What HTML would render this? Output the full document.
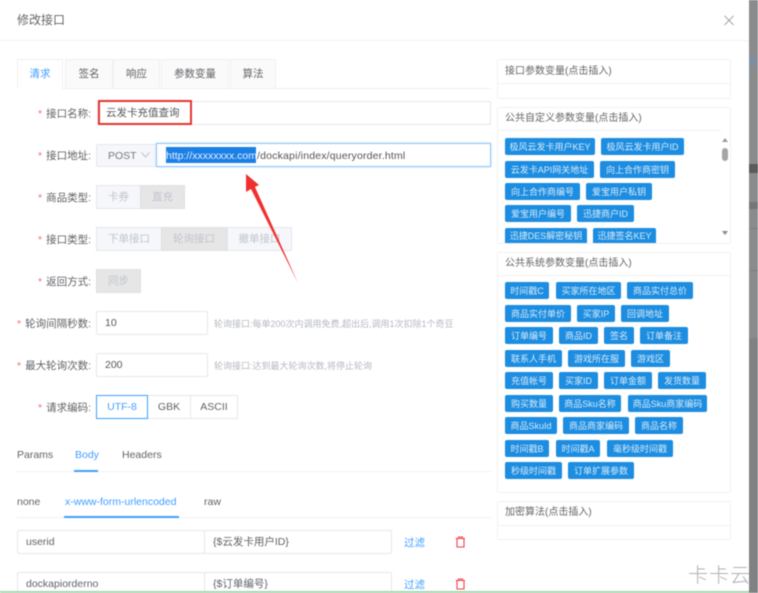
<!DOCTYPE html>
<html lang="zh"><head><meta charset="utf-8"><style>
html,body{margin:0;padding:0;width:758px;height:593px;overflow:hidden;background:#fff}
#r{position:relative;width:758px;height:593px;overflow:hidden;filter:blur(.45px);font:10.5px/1 "Liberation Sans","Noto Sans CJK SC",sans-serif;color:#606266}
#r div,#r span.a{position:absolute;box-sizing:border-box;white-space:nowrap}
.b{border:1px solid #e4e7ed;border-radius:2px;background:#fff}
.c{display:flex;align-items:center;justify-content:center;padding-top:1px}
.l{display:flex;align-items:center;justify-content:flex-end;right:667px;height:26px;color:#606266;font-size:10.5px}
.l i{color:#f56c6c;font-style:normal;margin-right:4px}
.d{background:#f5f7fa;color:#c0c4cc;border:1px solid #e4e7ed}
.e{background:#e6e6e6;color:#c0c4cc;border:1px solid #e0e0e0}
.t{background:#1c8de0;color:#d8ebfa;height:17px;border-radius:2px;display:flex;align-items:center;justify-content:center;font-size:9px;padding-top:1px}
.tab{top:59px;height:30px;background:#fafafa;border:1px solid #eff0f3;display:flex;align-items:center;justify-content:center;color:#606266;padding-top:1px}
.v{display:flex;align-items:center;padding-left:8px;padding-top:1px}
.h{color:#b4b8c0;font-size:9px}
.p{font-size:10px;color:#666}
</style></head><body><div id="r">
<div style="left:749px;top:0;width:9px;height:593px;background:#808182"></div>
<div style="left:749px;top:0;width:9px;height:338px;background:#8a8b8c"></div>
<div style="left:749px;top:58px;width:7px;height:8px;background:#7a8ea6"></div>
<div style="left:749px;top:164px;width:9px;height:9px;background:#5a5a5a"></div>
<div style="left:749px;top:202px;width:9px;height:7px;background:#767676"></div>
<div style="left:749px;top:228px;width:9px;height:1px;background:#7c7c7c"></div>
<div style="left:749px;top:270px;width:9px;height:1px;background:#7c7c7c"></div>

<div style="left:17px;top:14px;font-size:12px;line-height:13px;color:#666">修改接口</div>
<div style="left:0;top:40px;width:749px;height:1px;background:#f1f1f1"></div>
<svg style="position:absolute;left:724px;top:15px" width="10" height="11" viewBox="0 0 10 11"><path d="M.5 .8 9.5 10M9.5 .8 .5 10" stroke="#a0a3a8" stroke-width="1" fill="none"/></svg>

<div style="left:17px;top:88px;width:474px;height:1px;background:#eff0f3"></div>
<div class="tab" style="left:17px;width:46px;background:#fff;border-bottom-color:#fff;color:#409eff">清求</div>
<div class="tab" style="left:65px;width:48px">签名</div>
<div class="tab" style="left:113px;width:47px">响应</div>
<div class="tab" style="left:161px;width:68px">参数变量</div>
<div class="tab" style="left:230px;width:46px">算法</div>

<div class="l" style="top:101px"><i>*</i>接口名称:</div>
<div class="b v" style="left:97px;top:101px;width:394px;height:24px;color:#555">云发卡充值查询</div>
<div style="left:98px;top:100px;width:94px;height:25px;border:2px solid #e5352f"></div>

<div class="l" style="top:143px"><i>*</i>接口地址:</div>
<div class="b c" style="left:96px;top:144px;width:61px;height:23px;background:#f5f7fa;justify-content:flex-start;padding-left:11px;color:#777">POST</div>
<svg style="position:absolute;left:141px;top:152px" width="9" height="6" viewBox="0 0 9 6"><path d="M.5 .5 4.5 5 8.5 .5" stroke="#c0c4cc" fill="none"/></svg>
<div style="left:156px;top:143px;width:335px;height:24px;border:1px solid #8cc5ff;box-shadow:0 0 2px #b5d9fb;background:#fff"></div>
<div style="left:166px;top:147px;width:90px;height:16px;background:#1a7fe6"></div>
<div style="left:166px;top:148px;height:16px;line-height:16px;color:#555"><span style="color:#e8f2fc">http://xxxxxxxx.com</span><span style="letter-spacing:.18px">/dockapi/index/queryorder.html</span></div>

<div class="l" style="top:185px"><i>*</i>商品类型:</div>
<div class="d c" style="left:96px;top:185px;width:45px;height:24px">卡券</div>
<div class="e c" style="left:140px;top:185px;width:45px;height:24px">直充</div>

<div class="l" style="top:227px"><i>*</i>接口类型:</div>
<div class="d c" style="left:96px;top:227px;width:66px;height:24px">下单接口</div>
<div class="e c" style="left:161px;top:227px;width:66px;height:24px">轮询接口</div>
<div class="d c" style="left:227px;top:227px;width:65px;height:24px">撤单接口</div>

<div class="l" style="top:269px"><i>*</i>返回方式:</div>
<div class="e c" style="left:96px;top:269px;width:45px;height:24px">同步</div>

<div class="l" style="top:311px"><i>*</i>轮询间隔秒数:</div>
<div class="b v" style="left:96px;top:311px;width:112px;height:24px;color:#555">10</div>
<div class="h" style="left:214px;top:320px">轮询接口:每单200次内调用免费,超出后,调用1次扣除1个奇豆</div>

<div class="l" style="top:353px"><i>*</i>最大轮询次数:</div>
<div class="b v" style="left:96px;top:353px;width:112px;height:24px;color:#555">200</div>
<div class="h" style="left:214px;top:362px">轮询接口:达到最大轮询次数,将停止轮询</div>

<div class="l" style="top:395px"><i>*</i>请求编码:</div>
<div class="b c" style="left:147px;top:395px;width:44px;height:24px;border-radius:0">GBK</div>
<div class="b c" style="left:190px;top:395px;width:48px;height:24px;border-radius:0">ASCII</div>
<div class="c" style="left:96px;top:395px;width:52px;height:24px;border:1px solid #409eff;color:#409eff;background:#fff">UTF-8</div>

<svg style="position:absolute;left:0;top:0" width="758" height="593"><polygon points="246,174 259,185 255,187 298,283 251,189 246,192" fill="#f0302e"/></svg>

<div style="left:17px;top:450px">Params</div>
<div style="left:75px;top:450px;color:#409eff">Body</div>
<div style="left:122px;top:450px">Headers</div>
<div style="left:17px;top:471px;width:474px;height:1px;background:#f0f1f3"></div>
<div style="left:74px;top:470px;width:24px;height:2px;background:#409eff"></div>

<div style="left:17px;top:497px">none</div>
<div style="left:65px;top:497px;color:#409eff">x-www-form-urlencoded</div>
<div style="left:204px;top:497px">raw</div>
<div style="left:17px;top:517px;width:474px;height:1px;background:#f0f1f3"></div>
<div style="left:64px;top:516px;width:115px;height:2px;background:#409eff"></div>

<div class="b v" style="left:17px;top:530px;width:188px;height:24px">userid</div>
<div class="b v" style="left:204px;top:530px;width:188px;height:24px">{$云发卡用户ID}</div>
<div style="left:404px;top:538px;color:#409eff">过滤</div>
<svg style="position:absolute;left:455px;top:536px" width="11" height="12" viewBox="0 0 11 12"><path d="M.8 2.5H10M3.5 2.5V1H7.5V2.5M2 2.5V11H9V2.5" fill="none" stroke="#f0424a" stroke-width="1.1"/></svg>

<div class="b v" style="left:17px;top:572px;width:188px;height:24px">dockapiorderno</div>
<div class="b v" style="left:204px;top:572px;width:188px;height:24px">{$订单编号}</div>
<div style="left:404px;top:580px;color:#409eff">过滤</div>
<svg style="position:absolute;left:455px;top:578px" width="11" height="12" viewBox="0 0 11 12"><path d="M.8 2.5H10M3.5 2.5V1H7.5V2.5M2 2.5V11H9V2.5" fill="none" stroke="#f0424a" stroke-width="1.1"/></svg>

<!-- panel 1 -->
<div class="b" style="left:497px;top:59px;width:234px;height:40px;border-color:#f0f1f3"></div>
<div style="left:497px;top:83px;width:234px;height:1px;background:#f0f1f3"></div>
<div class="p" style="left:505px;top:67px">接口参数变量(点击插入)</div>

<!-- panel 2 -->
<div class="b" style="left:497px;top:107px;width:234px;height:137px;border-color:#f0f1f3"></div>
<div style="left:497px;top:130px;width:224px;height:1px;background:#f0f1f3"></div>
<div class="p" style="left:505px;top:114px">公共自定义参数变量(点击插入)</div>
<div class="t" style="left:505px;top:138px;width:90px">极风云发卡用户KEY</div>
<div class="t" style="left:601px;top:138px;width:83px">极风云发卡用户ID</div>
<div class="t" style="left:505px;top:161px;width:89px">云发卡API网关地址</div>
<div class="t" style="left:600px;top:161px;width:75px">向上合作商密钥</div>
<div class="t" style="left:505px;top:183px;width:75px">向上合作商编号</div>
<div class="t" style="left:586px;top:183px;width:66px">爱宝用户私钥</div>
<div class="t" style="left:505px;top:205px;width:66px">爱宝用户编号</div>
<div class="t" style="left:577px;top:205px;width:57px">迅捷商户ID</div>
<div class="t" style="left:505px;top:228px;width:82px;height:15px;border-radius:2px 2px 0 0">迅捷DES解密秘钥</div>
<div class="t" style="left:593px;top:228px;width:63px;height:15px;border-radius:2px 2px 0 0">迅捷签名KEY</div>
<svg style="position:absolute;left:720px;top:136px" width="10" height="104" viewBox="0 0 10 104"><path d="M2 6 5 2 8 6Z" fill="#9a9a9a"/><rect x="2" y="12" width="6" height="13" rx="3" fill="#a5a5a5"/><path d="M2 95 5 99 8 95Z" fill="#8a8a8a"/></svg>

<!-- panel 3 -->
<div class="b" style="left:497px;top:252px;width:234px;height:241px;border-color:#f0f1f3"></div>
<div style="left:497px;top:275px;width:234px;height:1px;background:#f0f1f3"></div>
<div class="p" style="left:505px;top:259px">公共系统参数变量(点击插入)</div>
<div class="t" style="left:505px;top:282px;width:44px">时间戳C</div>
<div class="t" style="left:556px;top:282px;width:65px">买家所在地区</div>
<div class="t" style="left:627px;top:282px;width:66px">商品实付总价</div>
<div class="t" style="left:505px;top:305px;width:66px">商品实付单价</div>
<div class="t" style="left:577px;top:305px;width:38px">买家IP</div>
<div class="t" style="left:621px;top:305px;width:48px">回调地址</div>
<div class="t" style="left:505px;top:327px;width:48px">订单编号</div>
<div class="t" style="left:559px;top:327px;width:39px">商品ID</div>
<div class="t" style="left:604px;top:327px;width:30px">签名</div>
<div class="t" style="left:640px;top:327px;width:48px">订单备注</div>
<div class="t" style="left:505px;top:350px;width:57px">联系人手机</div>
<div class="t" style="left:568px;top:350px;width:57px">游戏所在服</div>
<div class="t" style="left:631px;top:350px;width:39px">游戏区</div>
<div class="t" style="left:505px;top:372px;width:48px">充值帐号</div>
<div class="t" style="left:559px;top:372px;width:39px">买家ID</div>
<div class="t" style="left:604px;top:372px;width:48px">订单金额</div>
<div class="t" style="left:658px;top:372px;width:48px">发货数量</div>
<div class="t" style="left:505px;top:395px;width:48px">购买数量</div>
<div class="t" style="left:559px;top:395px;width:62px">商品Sku名称</div>
<div class="t" style="left:628px;top:395px;width:79px">商品Sku商家编码</div>
<div class="t" style="left:505px;top:417px;width:52px">商品SkuId</div>
<div class="t" style="left:563px;top:417px;width:66px">商品商家编码</div>
<div class="t" style="left:635px;top:417px;width:48px">商品名称</div>
<div class="t" style="left:505px;top:440px;width:44px">时间戳B</div>
<div class="t" style="left:556px;top:440px;width:44px">时间戳A</div>
<div class="t" style="left:607px;top:440px;width:66px">毫秒级时间戳</div>
<div class="t" style="left:505px;top:462px;width:57px">秒级时间戳</div>
<div class="t" style="left:568px;top:462px;width:66px">订单扩展参数</div>

<!-- panel 4 -->
<div class="b" style="left:497px;top:501px;width:234px;height:39px;border-color:#f0f1f3"></div>
<div style="left:497px;top:525px;width:234px;height:1px;background:#f0f1f3"></div>
<div class="p" style="left:505px;top:508px">加密算法(点击插入)</div>

<div style="left:688px;top:564px;width:61px;height:24px;overflow:hidden;font-size:20px;line-height:24px;color:#b0b0b0;font-weight:300;letter-spacing:1px">卡卡云</div>
<div style="left:0;top:591px;width:749px;height:2px;background:#a8d5b0"></div>
</div></body></html>
